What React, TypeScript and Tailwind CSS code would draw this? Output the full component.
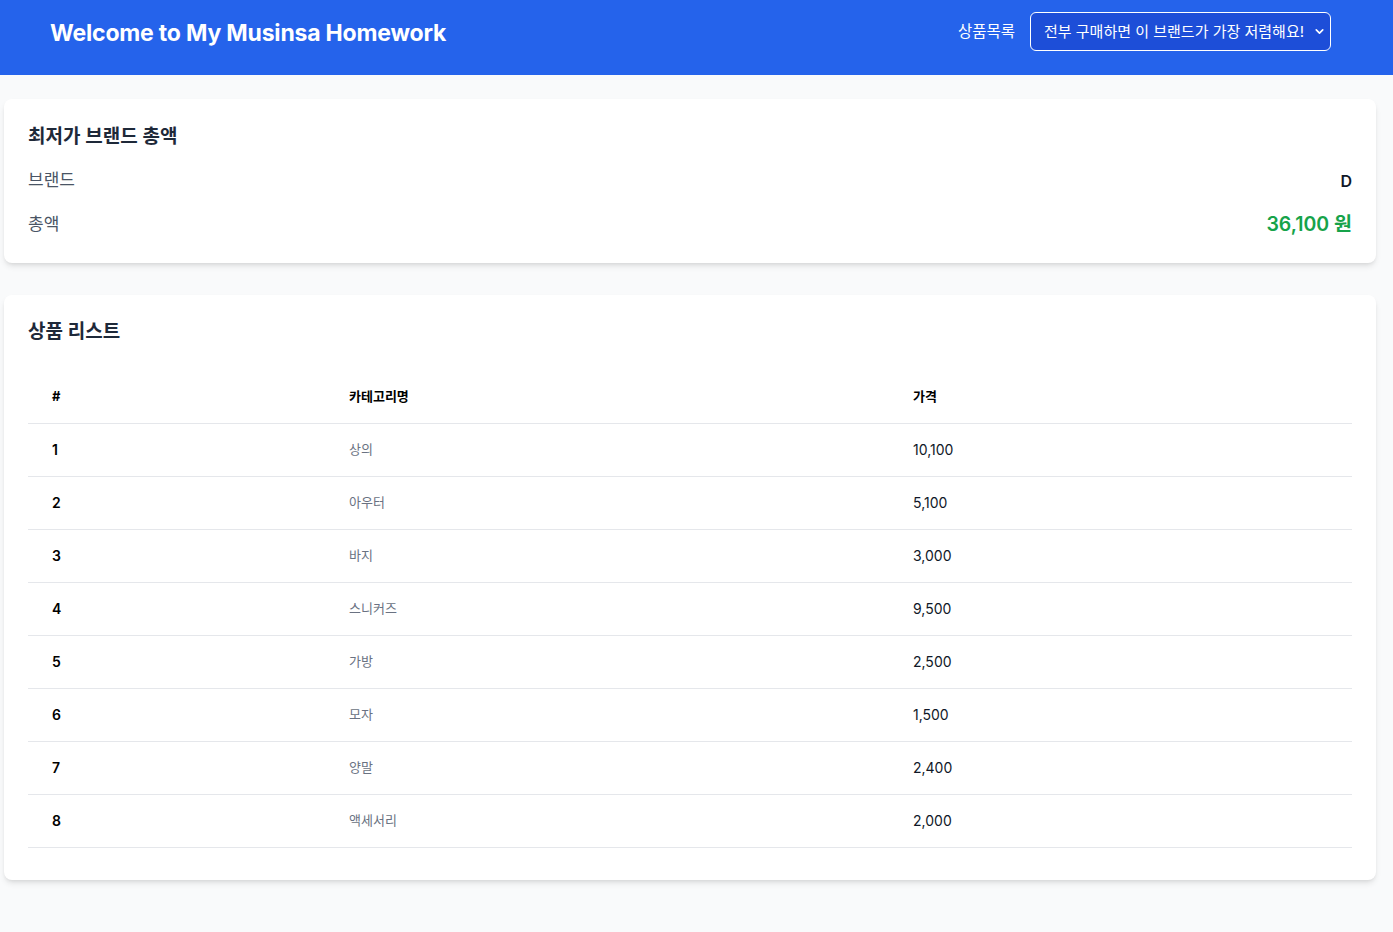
import { ChevronDown } from "lucide-react";

const ROWS = [
  { id: 1, category: "상의", price: "10,100" },
  { id: 2, category: "아우터", price: "5,100" },
  { id: 3, category: "바지", price: "3,000" },
  { id: 4, category: "스니커즈", price: "9,500" },
  { id: 5, category: "가방", price: "2,500" },
  { id: 6, category: "모자", price: "1,500" },
  { id: 7, category: "양말", price: "2,400" },
  { id: 8, category: "액세서리", price: "2,000" },
];

const FONT = "font-['Inter','Noto_Sans_CJK_KR',sans-serif]";

export default function App() {
  return (
    <div className={`min-h-screen bg-gray-50 ${FONT}`}>
      {/* Header */}
      <header className="h-[75px] bg-[#2563eb] flex items-start justify-between pl-[50px] pr-[62px] pt-3">
        <h1 className="h-[43px] flex items-center text-[23px] font-bold text-white tracking-[-0.2px]">Welcome to My Musinsa Homework</h1>
        <div className="flex items-center gap-[15px]">
          <span className="text-[15.5px] font-normal text-white pt-px">상품목록</span>
          <div className="relative">
            <select className="appearance-none w-[301px] h-[39px] pl-[13px] pr-4 pt-px rounded-md border border-white bg-[#1d4ed8] text-white text-[15px] font-normal outline-none">
              <option>전부 구매하면 이 브랜드가 가장 저렴해요!</option>
            </select>
            <ChevronDown className="absolute right-[5px] top-[13px] w-[13px] h-[13px] text-white pointer-events-none" strokeWidth={3} />
          </div>
        </div>
      </header>

      <main className="pt-6 pl-1 pr-[17px] pb-[52px] flex flex-col gap-8">
        {/* Cheapest brand */}
        <section className="bg-white rounded-lg shadow-md p-6 flex flex-col">
          <h2 className="text-[19px] leading-[28px] font-semibold text-gray-800 mb-[18px]">최저가 브랜드 총액</h2>
          <div className="flex items-center justify-between h-6">
            <span className="text-[17px] text-gray-600">브랜드</span>
            <span className="text-[16px] font-semibold text-gray-900">D</span>
          </div>
          <div className="flex items-center justify-between h-7 mt-[18px]">
            <span className="text-[17px] text-gray-600">총액</span>
            <span className="text-[19.5px] font-semibold text-[#16a34a]">36,100 원</span>
          </div>
        </section>

        {/* Product list */}
        <section className="bg-white rounded-lg shadow-md px-6 pt-6 pb-8">
          <h2 className="text-[19px] leading-[26px] font-semibold text-gray-800 mb-[26px]">상품 리스트</h2>
          <table className="w-full border-collapse text-left">
            <thead>
              <tr className="border-b border-gray-200">
                <th className="w-[297px] h-[52px] px-6 text-[13px] font-bold text-black">#</th>
                <th className="w-[564px] h-[52px] px-6 text-[13px] font-bold text-black">카테고리명</th>
                <th className="h-[52px] px-6 text-[13px] font-bold text-black">가격</th>
              </tr>
            </thead>
            <tbody>
              {ROWS.map(r => (
                <tr key={r.id} className="border-b border-gray-200">
                  <td className="h-[53px] px-6 text-[14px] font-semibold text-black">{r.id}</td>
                  <td className="h-[53px] px-6 text-[13px] text-gray-500">{r.category}</td>
                  <td className="h-[53px] px-6 text-[14px] text-gray-900">{r.price}</td>
                </tr>
              ))}
            </tbody>
          </table>
        </section>
      </main>
    </div>
  );
}
